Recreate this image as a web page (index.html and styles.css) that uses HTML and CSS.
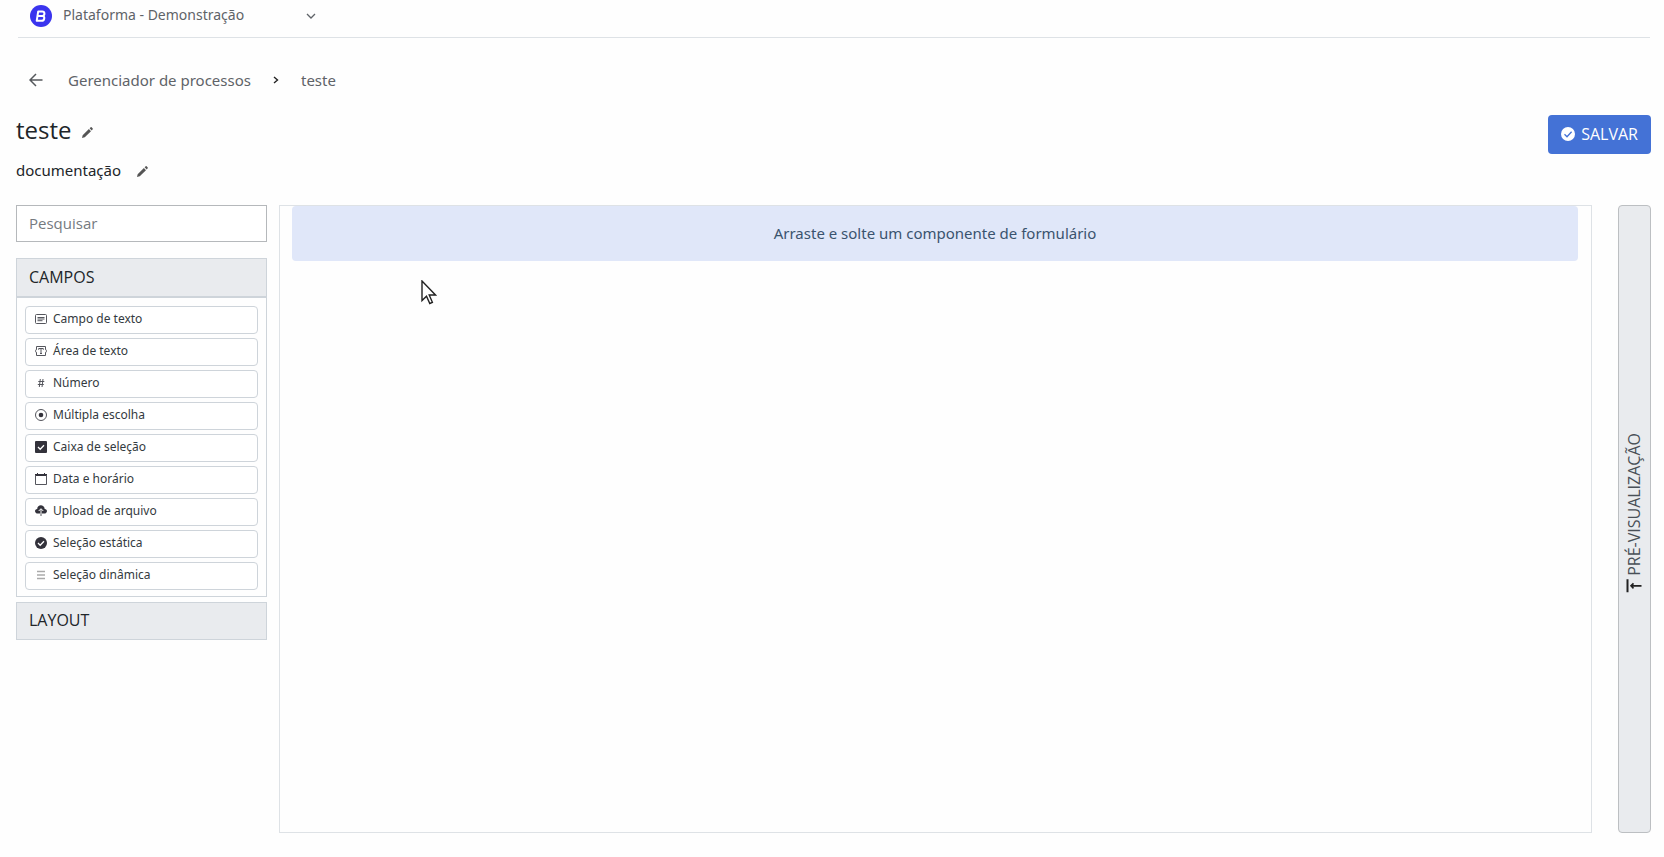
FILE: index.html
```
<!DOCTYPE html>
<html lang="pt-BR">
<head>
    <meta charset="UTF-8">
    <meta name="viewport" content="width=device-width, initial-scale=1.0">
    <title>Gerenciador de processos</title>
    <link rel="stylesheet" href="styles.css">
</head>
<body>
    <header class="topbar">
        <button class="platform" type="button">
            <svg class="logo" viewBox="0 0 22 22" aria-hidden="true">
                <circle cx="11" cy="11" r="11" fill="#3a34ee"/>
                <path d="M8.200 6.400h4c3 0 2.800 4 .4 4.500 2.600.3 2.200 4.900-1.200 4.900H6.700zM7.400 10.900h5" fill="none" stroke="#fff" stroke-width="2" stroke-linejoin="round"/>
            </svg>
            <span class="platform-name">Plataforma - Demonstração</span>
            <svg class="caret" viewBox="0 0 10 10" aria-hidden="true"><path d="M1 3l4 4 4-4"/></svg>
        </button>
    </header>

    <nav class="breadcrumb" aria-label="Navegação">
        <a class="back" href="#" aria-label="Voltar">
            <svg viewBox="0 0 14 14" aria-hidden="true"><path d="M13.500 7H1.500M7 1L1 7l6 6"/></svg>
        </a>
        <a class="crumb" href="#">Gerenciador de processos</a>
        <svg class="separator" viewBox="0 0 6 8" aria-hidden="true"><path d="M1 1l3.500 3L1 7"/></svg>
        <a class="crumb" href="#">teste</a>
    </nav>

    <section class="page-head">
        <div>
            <div class="title-row">
                <h1>teste</h1>
                <button class="edit" type="button" aria-label="Editar título">
                    <svg viewBox="0 0 12 12" aria-hidden="true"><path d="M0 12l.7-3L7.500 2.200l2.300 2.300L3 11.300zM8.300 1.400L9.500.3q.5-.4 1 0l1.200 1.200q.4.500 0 1l-1.100 1.200z"/></svg>
                </button>
            </div>
            <div class="doc-row">
                <p>documentação</p>
                <button class="edit" type="button" aria-label="Editar documentação">
                    <svg viewBox="0 0 12 12" aria-hidden="true"><path d="M0 12l.7-3L7.500 2.200l2.300 2.300L3 11.300zM8.300 1.400L9.500.3q.5-.4 1 0l1.200 1.200q.4.500 0 1l-1.100 1.200z"/></svg>
                </button>
            </div>
        </div>
        <button class="save" type="button">
            <svg viewBox="0 0 14 14" aria-hidden="true"><circle cx="7" cy="7" r="7" fill="#fff"/><path d="M3.500 7.300l2.500 2.400 4.600-5" fill="none" stroke="#4472d6" stroke-width="1.300"/></svg>
            SALVAR
        </button>
    </section>

    <main class="builder">
        <aside class="sidebar">
            <input class="search" type="search" placeholder="Pesquisar" aria-label="Pesquisar">

            <div class="group">
                <button class="group-header" type="button">CAMPOS</button>
                <div class="field-list">
                    <button class="field" type="button">
                        <svg viewBox="0 0 12 12" aria-hidden="true"><rect class="line" x=".5" y="1.500" width="11" height="9" rx="1"/><path class="line" d="M2.500 4.500h7M2.500 6h7M2.500 7.700h5"/></svg>
                        Campo de texto
                    </button>
                    <button class="field" type="button">
                        <svg viewBox="0 0 12 12" aria-hidden="true"><path class="line" d="M1.500 4V1.500h9V4M1.500 8v2.500h9V8M1.500 4Q1.300 5.500.2 6q1.100.5 1.300 2M10.500 4q.2 1.500 1.300 2-1.100.5-1.300 2M3.700 4.800V3.500h4.600v1.300M6 3.500v5M5 8.500h2"/></svg>
                        Área de texto
                    </button>
                    <button class="field" type="button">
                        <svg viewBox="0 0 12 12" aria-hidden="true"><path class="line" d="M5.300 2l-1 8M8 2L7 10M3.300 4.500h6M2.800 7.500h6"/></svg>
                        Número
                    </button>
                    <button class="field" type="button">
                        <svg viewBox="0 0 12 12" aria-hidden="true"><circle class="line" cx="6" cy="6" r="5.500"/><circle cx="6" cy="6" r="2.300"/></svg>
                        Múltipla escolha
                    </button>
                    <button class="field" type="button">
                        <svg viewBox="0 0 12 12" aria-hidden="true"><rect width="12" height="12" rx="1"/><path class="tick" d="M3 6l2.200 2.200L9 4.200"/></svg>
                        Caixa de seleção
                    </button>
                    <button class="field" type="button">
                        <svg viewBox="0 0 12 12" aria-hidden="true"><path d="M0 1h12v2H0zM2 0h1v2H2zM9 0h1v2H9z"/><path class="line" d="M.5 2v9.500h11V2"/></svg>
                        Data e horário
                    </button>
                    <button class="field" type="button">
                        <svg viewBox="0 0 12 12" aria-hidden="true"><path d="M3 8.500C-.8 8.500-.8 4.200 2.200 4 2.300-1 9.300-1 9.700 4c3.200.2 3 4.500-.6 4.500z"/><path d="M6 9V4M3.700 6L6 3.700 8.300 6" fill="none" stroke="#fff"/><path class="line" d="M6 8.500V11"/></svg>
                        Upload de arquivo
                    </button>
                    <button class="field" type="button">
                        <svg viewBox="0 0 12 12" aria-hidden="true"><circle cx="6" cy="6" r="6"/><path class="tick" d="M3 6l2.200 2.200L9 4.200"/></svg>
                        Seleção estática
                    </button>
                    <button class="field" type="button">
                        <svg viewBox="0 0 12 12" aria-hidden="true"><path d="M2 2.500h8M2 6h8M2 9.500h8" stroke="#aaa" stroke-width="1.500"/></svg>
                        Seleção dinâmica
                    </button>
                </div>
            </div>

            <button class="group-header closed" type="button">LAYOUT</button>
        </aside>

        <section class="canvas">
            <div class="drop-hint">Arraste e solte um componente de formulário</div>
            <svg class="pointer" viewBox="0 0 16 25" aria-hidden="true"><path d="M1 1v19.500l4.500-4.300 3.300 7.300 2.600-1.200L8.200 15h6.300z"/></svg>
        </section>

        <button class="preview" type="button">
            <span class="preview-label">
                <svg viewBox="0 0 16 16" aria-hidden="true"><path d="M1.500 1.500v13" stroke-width="2"/><path d="M15.500 8H5M7.500 5.500L5 8l2.500 2.500"/></svg>
                PRÉ-VISUALIZAÇÃO
            </span>
        </button>
    </main>
</body>
</html>
```

FILE: styles.css
```
:root {
    --text-color: #212529;
    --muted-color: #5f6368;
    --border-color: #ced4da;
    --canvas-border: #dee2e6;
    --header-color: #e9ebee;
    --primary-color: #4472d6;
    --hint-color: #e0e7f9;
}

* {
    box-sizing: border-box;
}

body {
    display: flex;
    flex-direction: column;
    min-height: 100vh;
    margin: 0;
    padding: 0 13px 24px 16px;
    background-color: #fefefe;
    color: var(--text-color);
    font-family: "Open Sans", "Noto Sans", sans-serif;
    font-size: 15px;
    line-height: 20px;
}

h1, p {
    margin: 0;
    font-weight: normal;
}

button {
    padding: 0;
    border: none;
    background: none;
    color: inherit;
    font: inherit;
    cursor: pointer;
}

a {
    color: inherit;
    text-decoration: none;
}

svg {
    display: block;
    flex: none;
}

.topbar {
    height: 38px;
    margin: 0 1px 0 2px;
    padding-left: 12px;
    border-bottom: 1px solid var(--canvas-border);
}

.platform {
    display: flex;
    align-items: center;
    height: 31px;
    gap: 11px;
    color: var(--muted-color);
    font-family: "Noto Sans", sans-serif;
    font-size: 14px;
}

.platform-name {
    width: 232px;
    padding-bottom: 2px;
    text-align: left;
}

.logo {
    width: 22px;
    height: 22px;
}

.caret {
    width: 10px;
    height: 10px;
    fill: none;
    stroke: var(--muted-color);
    stroke-width: 1.3;
}

.breadcrumb {
    display: flex;
    align-items: center;
    height: 84px;
    padding-left: 13px;
    color: var(--muted-color);
    font-family: "Noto Sans", sans-serif;
}

.back {
    margin-right: 25px;
}

.back svg {
    width: 14px;
    height: 14px;
    fill: none;
    stroke: #55585c;
    stroke-width: 1.5;
}

.separator {
    width: 6px;
    height: 8px;
    margin: 0 22px;
    fill: none;
    stroke: #222;
    stroke-width: 1.4;
}

.page-head {
    display: flex;
    justify-content: space-between;
    align-items: flex-start;
    height: 83px;
    margin-top: -7px;
}

.title-row,
.doc-row {
    display: flex;
    align-items: center;
}

.title-row {
    gap: 10px;
    height: 32px;
    margin-bottom: 13px;
}

.doc-row {
    gap: 16px;
    font-family: "Noto Sans", sans-serif;
}

h1 {
    font-size: 24px;
    line-height: 32px;
    padding-bottom: 2px;
}

.edit {
    padding-top: 3px;
}

.edit svg {
    width: 11px;
    height: 11px;
    fill: #555;
}

.save {
    display: flex;
    align-items: center;
    gap: 6px;
    height: 39px;
    padding: 0 13px 2px;
    border-radius: 4px;
    background-color: var(--primary-color);
    color: white;
    font-size: 16px;
}

.save svg {
    width: 14px;
    height: 14px;
}

.builder {
    display: flex;
    flex: 1;
    margin-top: 7px;
}

.sidebar {
    flex: 0 0 251px;
    margin-right: 12px;
}

.search {
    display: block;
    width: 100%;
    height: 37px;
    margin-bottom: 16px;
    padding: 0 12px 2px;
    border: 1px solid #b5b8bb;
    background-color: white;
    color: inherit;
    font: inherit;
}

.search::placeholder {
    color: #757a7f;
}

.group {
    margin-bottom: 5px;
    border: 1px solid var(--border-color);
}

.group-header {
    display: block;
    width: 100%;
    height: 39px;
    padding: 0 12px 2px;
    border-bottom: 2px solid var(--border-color);
    background-color: var(--header-color);
    font-size: 16px;
    text-align: left;
}

.group-header.closed {
    height: 38px;
    border: 1px solid var(--border-color);
}

.field-list {
    display: flex;
    flex-direction: column;
    gap: 4px;
    padding: 8px 8px 6px;
}

.field {
    display: flex;
    align-items: center;
    gap: 6px;
    height: 28px;
    padding: 0 9px 3px;
    border: 1px solid var(--border-color);
    border-radius: 4px;
    background-color: white;
    color: #343a40;
    font-family: "Noto Sans", sans-serif;
    font-size: 12px;
    cursor: grab;
}

.field svg {
    width: 12px;
    height: 12px;
    fill: #33323b;
}

.field .line {
    fill: none;
    stroke: #55565d;
}

.field .tick {
    fill: none;
    stroke: white;
    stroke-width: 1.3;
}

.canvas {
    position: relative;
    flex: 1;
    padding: 0 13px 0 12px;
    border: 1px solid var(--canvas-border);
}

.drop-hint {
    padding: 17px 0 18px;
    border-radius: 4px;
    background-color: var(--hint-color);
    color: #3a536e;
    font-family: "Noto Sans", sans-serif;
    text-align: center;
}

.pointer {
    position: absolute;
    top: 74px;
    left: 141px;
    width: 16px;
    height: 25px;
    fill: white;
    stroke: #222;
    stroke-width: 1.4;
}

.preview {
    display: flex;
    align-items: center;
    justify-content: center;
    width: 33px;
    margin-left: 26px;
    padding: 0 2px 12px 0;
    border: 1px solid #bcbfc2;
    border-radius: 4px;
    background-color: var(--header-color);
    color: #495057;
    font-size: 16px;
}

.preview-label {
    display: flex;
    align-items: center;
    gap: 2px;
    writing-mode: vertical-rl;
    transform: rotate(180deg);
}

.preview-label svg {
    width: 16px;
    height: 16px;
    transform: rotate(180deg);
    fill: none;
    stroke: #222;
    stroke-width: 1.6;
}
```
